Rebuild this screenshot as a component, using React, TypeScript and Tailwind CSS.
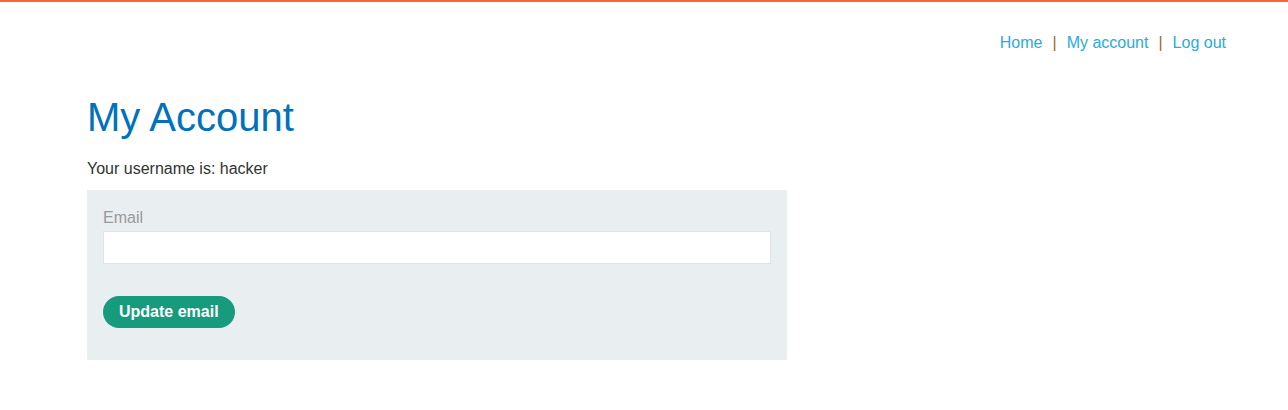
import React from 'react';

const App = () => {
  return (
    <div className="min-h-[410px] bg-white border-t-2 border-[#ff6633] font-['Liberation_Sans',Arial,sans-serif] text-[16px] text-[#333332]">
      <div className="flex justify-end pr-[62px] pt-[29px]">
        <nav className="flex items-center text-[#29abe0]">
          <a href="#">Home</a>
          <span className="px-[10px] text-[#a8621f]">|</span>
          <a href="#">My account</a>
          <span className="px-[10px] text-[#a8621f]">|</span>
          <a href="#">Log out</a>
        </nav>
      </div>

      <div className="pl-[87px]">
        <h1 className="mt-[38px] text-[40px] leading-[48px] text-[#0071bc]">My Account</h1>
        <p className="mt-[17px] leading-[22px]">Your username is: hacker</p>

        <form className="mt-[10px] flex w-[700px] flex-col bg-[#e9eef1] px-[16px] pt-[17px] pb-[32px]">
          <label className="leading-[22px] text-[#999999]">Email</label>
          <input
            type="email"
            className="mt-[2px] h-[33px] w-full border border-[#e0e2e3] bg-white px-2 outline-none"
          />
          <div className="mt-[32px]">
            <button
              type="button"
              className="h-[32px] rounded-full bg-[#179b7d] px-[16px] font-bold text-white"
            >
              Update email
            </button>
          </div>
        </form>
      </div>
    </div>
  );
};

export default App;
